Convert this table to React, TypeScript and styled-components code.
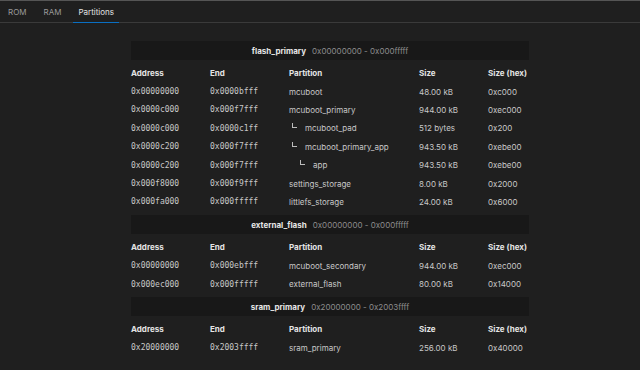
import React from "react";
import styled, { createGlobalStyle } from "styled-components";

interface Partition {
  address: string;
  end: string;
  name: string;
  depth: number;
  size: string;
  sizeHex: string;
}

interface Region {
  name: string;
  range: string;
  partitions: Partition[];
}

const regions: Region[] = [
  {
    name: "flash_primary",
    range: "0x00000000 - 0x000fffff",
    partitions: [
      { address: "0x00000000", end: "0x0000bfff", name: "mcuboot", depth: 0, size: "48.00 kB", sizeHex: "0xc000" },
      { address: "0x0000c000", end: "0x000f7fff", name: "mcuboot_primary", depth: 0, size: "944.00 kB", sizeHex: "0xec000" },
      { address: "0x0000c000", end: "0x0000c1ff", name: "mcuboot_pad", depth: 1, size: "512 bytes", sizeHex: "0x200" },
      { address: "0x0000c200", end: "0x000f7fff", name: "mcuboot_primary_app", depth: 1, size: "943.50 kB", sizeHex: "0xebe00" },
      { address: "0x0000c200", end: "0x000f7fff", name: "app", depth: 2, size: "943.50 kB", sizeHex: "0xebe00" },
      { address: "0x000f8000", end: "0x000f9fff", name: "settings_storage", depth: 0, size: "8.00 kB", sizeHex: "0x2000" },
      { address: "0x000fa000", end: "0x000fffff", name: "littlefs_storage", depth: 0, size: "24.00 kB", sizeHex: "0x6000" },
    ],
  },
  {
    name: "external_flash",
    range: "0x00000000 - 0x000fffff",
    partitions: [
      { address: "0x00000000", end: "0x000ebfff", name: "mcuboot_secondary", depth: 0, size: "944.00 kB", sizeHex: "0xec000" },
      { address: "0x000ec000", end: "0x000fffff", name: "external_flash", depth: 0, size: "80.00 kB", sizeHex: "0x14000" },
    ],
  },
  {
    name: "sram_primary",
    range: "0x20000000 - 0x2003ffff",
    partitions: [
      { address: "0x20000000", end: "0x2003ffff", name: "sram_primary", depth: 0, size: "256.00 kB", sizeHex: "0x40000" },
    ],
  },
];

const tabs = ["ROM", "RAM", "Partitions"];

const GlobalStyle = createGlobalStyle`
  html, body {
    margin: 0;
    padding: 0;
    background: #1f1f1f;
  }
  body {
    font-family: Inter, "Liberation Sans", sans-serif;
    color: #cccccc;
  }
`;

const Page = styled.div`
  min-height: 370px;
  border-top: 1px solid #555555;
  box-sizing: border-box;
`;

const TabBar = styled.div`
  display: flex;
  gap: 7px;
  height: 21px;
  padding-left: 3px;
  border-bottom: 1px solid #3a3a3a;
`;

const Tab = styled.div<{ $active?: boolean }>`
  display: flex;
  align-items: center;
  padding: 0 5px 1px;
  font-size: 8px;
  color: ${(p) => (p.$active ? "#e2e2e2" : "#9a9a9a")};
  box-shadow: ${(p) => (p.$active ? "inset 0 -1px 0 #0a6fc2" : "none")};
  margin-bottom: -1px;
`;

const Content = styled.div`
  width: 398px;
  margin: 18px 0 0 131px;
`;

const Band = styled.div`
  display: flex;
  justify-content: center;
  align-items: center;
  gap: 6px;
  height: 19px;
  margin: 4px 0;
  background: #181818;
  font-size: 8px;
  &:first-child {
    margin-top: 0;
  }
`;

const BandName = styled.span`
  font-weight: 700;
  color: #e6e6e6;
`;

const BandRange = styled.span`
  color: #8c8c8c;
`;

const Row = styled.div`
  display: grid;
  grid-template-columns: 79px 79px 130px 69px 1fr;
  align-items: center;
  height: 18.4px;
  font-size: 8px;
`;

const HeadCell = styled.div`
  font-weight: 700;
  color: #e4e4e4;
  white-space: nowrap;
`;

const MonoCell = styled.div`
  font-family: "DejaVu Sans Mono", "Liberation Mono", monospace;
  font-size: 8px;
  color: #c8c8c8;
`;

const Cell = styled.div`
  color: #c8c8c8;
  white-space: nowrap;
  display: flex;
  align-items: center;
`;

const Branch = styled.span<{ $depth: number }>`
  display: inline-block;
  width: 4px;
  height: 4px;
  margin-left: ${(p) => 3 + (p.$depth - 1) * 8}px;
  margin-right: 8px;
  margin-top: -5px;
  border-left: 1px solid #bdbdbd;
  border-bottom: 1px solid #bdbdbd;
`;

export default function App() {
  return (
    <Page>
      <GlobalStyle />
      <TabBar>
        {tabs.map((t) => (
          <Tab key={t} $active={t === "Partitions"}>
            {t}
          </Tab>
        ))}
      </TabBar>
      <Content>
        {regions.map((r) => (
          <React.Fragment key={r.name}>
            <Band>
              <BandName>{r.name}</BandName>
              <BandRange>{r.range}</BandRange>
            </Band>
            <Row>
              <HeadCell>Address</HeadCell>
              <HeadCell>End</HeadCell>
              <HeadCell>Partition</HeadCell>
              <HeadCell>Size</HeadCell>
              <HeadCell>Size (hex)</HeadCell>
            </Row>
            {r.partitions.map((p, i) => (
              <Row key={i}>
                <MonoCell>{p.address}</MonoCell>
                <MonoCell>{p.end}</MonoCell>
                <Cell>
                  {p.depth > 0 && <Branch $depth={p.depth} />}
                  {p.name}
                </Cell>
                <Cell>{p.size}</Cell>
                <Cell>{p.sizeHex}</Cell>
              </Row>
            ))}
          </React.Fragment>
        ))}
      </Content>
    </Page>
  );
}
